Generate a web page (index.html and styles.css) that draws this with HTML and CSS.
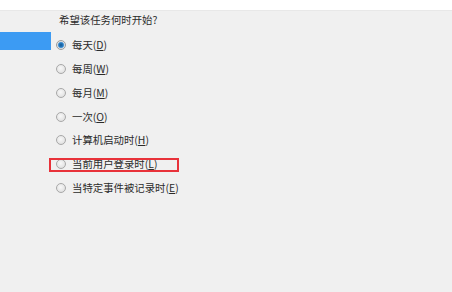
FILE: index.html
```html
<!DOCTYPE html>
<html lang="zh-CN">
<head>
<meta charset="utf-8">
<link rel="stylesheet" href="styles.css">
</head>
<body>
<div class="topband"></div>
<div class="main">
  <div class="sidebar"><div class="selected"></div></div>
  <div class="content">
    <div class="title">希望该任务何时开始?</div>
    <ul class="options">
      <li class="opt"><span class="radio checked"></span><span class="label">每天(<u>D</u>)</span></li>
      <li class="opt"><span class="radio"></span><span class="label">每周(<u>W</u>)</span></li>
      <li class="opt"><span class="radio"></span><span class="label">每月(<u>M</u>)</span></li>
      <li class="opt"><span class="radio"></span><span class="label">一次(<u>O</u>)</span></li>
      <li class="opt"><span class="radio"></span><span class="label">计算机启动时(<u>H</u>)</span></li>
      <li class="opt marked"><span class="radio"></span><span class="label">当前用户登录时(<u>L</u>)</span><span class="annot"></span></li>
      <li class="opt"><span class="radio"></span><span class="label">当特定事件被记录时(<u>E</u>)</span></li>
    </ul>
  </div>
</div>
</body>
</html>
```

FILE: styles.css
```css
html, body {
  margin: 0;
  padding: 0;
  width: 452px;
  height: 292px;
  overflow: hidden;
  background: #f0f0f0;
  font-family: "Noto Sans CJK SC", "Microsoft YaHei", sans-serif;
  font-size: 10.4px;
  color: #2b2b2b;
}
.topband {
  height: 11px;
  background: #ffffff;
  border-bottom: 1px solid #e8e8e8;
  box-sizing: border-box;
}
.main {
  display: flex;
  height: 281px;
}
.sidebar {
  width: 51px;
  padding-top: 21px;
  box-sizing: border-box;
}
.selected {
  height: 18px;
  background: #3c9bf3;
}
.content {
  flex: 1;
  padding-left: 5px;
  position: relative;
}
.title {
  margin-left: 3px;
  padding-top: 1px;
  line-height: 16px;
  height: 16px;
}
.options {
  list-style: none;
  margin: 0;
  padding: 0;
  padding-top: 5.6px;
}
.opt {
  display: flex;
  align-items: center;
  height: 23.7px;
  position: relative;
}
.radio {
  width: 10px;
  height: 10px;
  box-sizing: border-box;
  border-radius: 50%;
  border: 1px solid #a8a8a8;
  background: radial-gradient(circle at 45% 40%, #f8f8f8 0%, #e6e6e6 60%, #d2d2d2 100%);
  margin-right: 6px;
  position: relative;
}
.radio.checked {
  border-color: #9c9c9c;
  background: radial-gradient(circle, #16578f 0, #2a7fc6 2.3px, #7fb3de 3px, #e4e4e4 3.6px, #d6d6d6 100%);
}
.label {
  line-height: 16px;
  white-space: nowrap;
}
.label u {
  text-underline-offset: 1px;
}
.annot {
  position: absolute;
  left: -7px;
  top: 6px;
  width: 130px;
  height: 14px;
  border: 2px solid #e8323a;
  box-sizing: border-box;
}
```
